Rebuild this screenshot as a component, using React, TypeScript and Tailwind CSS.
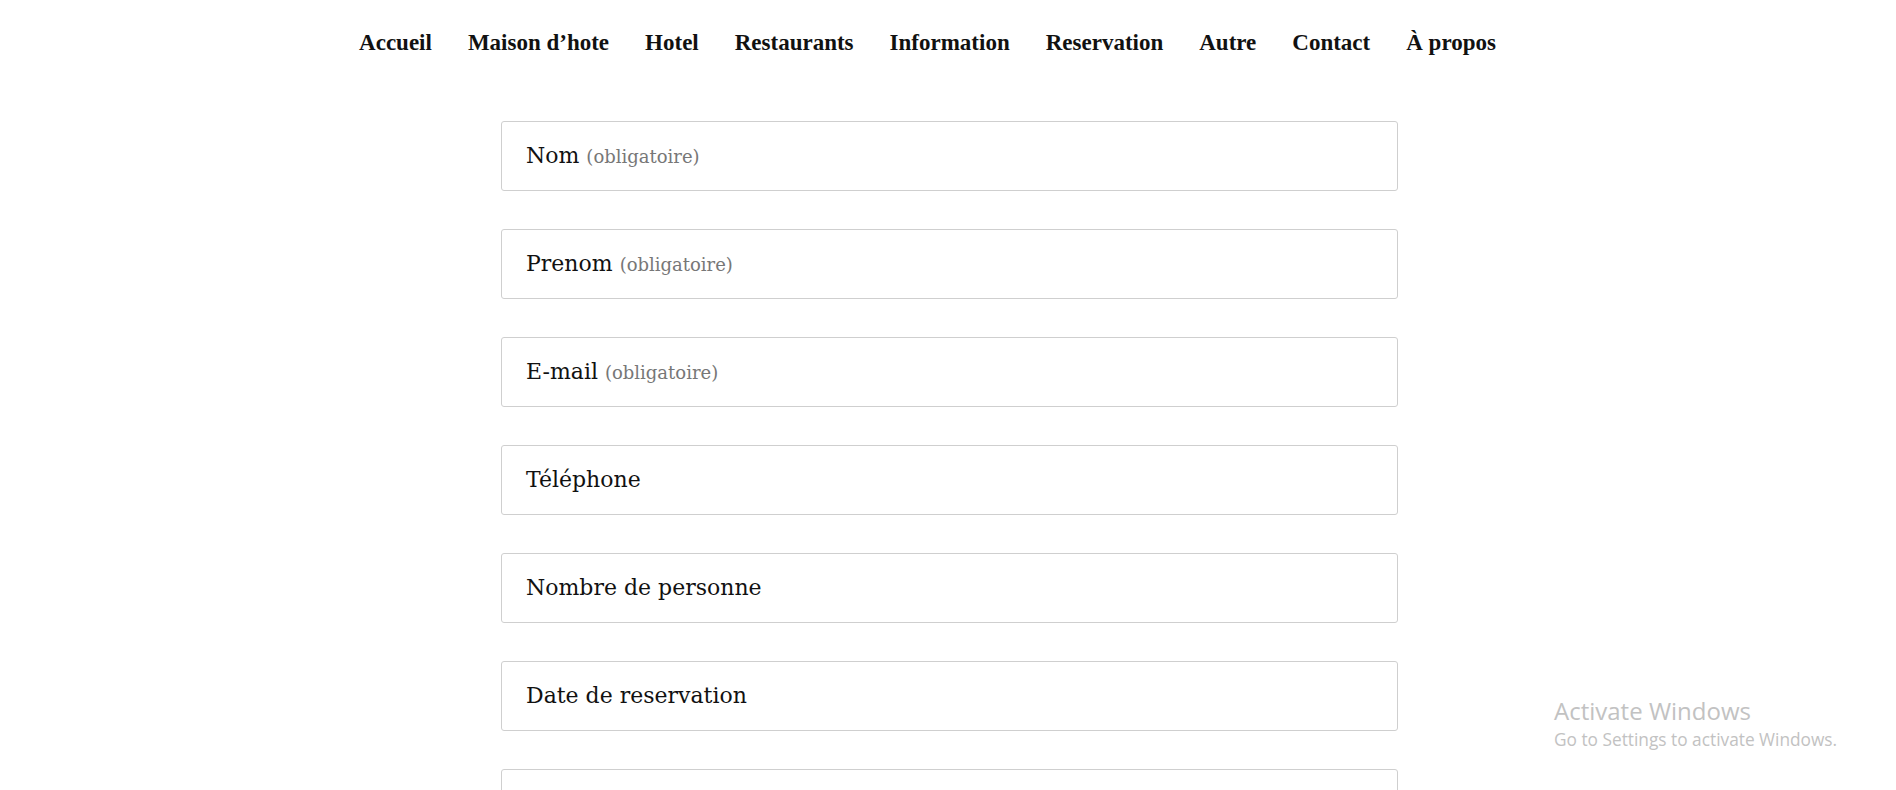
import React from "react";

const navItems = [
  "Accueil",
  "Maison d\u2019hote",
  "Hotel",
  "Restaurants",
  "Information",
  "Reservation",
  "Autre",
  "Contact",
  "\u00C0 propos",
];

const fields: { label: string; req?: boolean }[] = [
  { label: "Nom", req: true },
  { label: "Prenom", req: true },
  { label: "E-mail", req: true },
  { label: "Téléphone" },
  { label: "Nombre de personne" },
  { label: "Date de reservation" },
  { label: "Message" },
];

export default function App() {
  return (
    <div className="relative w-full h-[790px] overflow-hidden bg-white">
      <nav className="flex justify-center pr-[41px] pt-[31px]">
        <ul className="flex gap-[36px]">
          {navItems.map((n) => (
            <li
              key={n}
              className="text-[23px] leading-[23px] font-bold text-[#111]"
              style={{ fontFamily: '"Liberation Serif", "Times New Roman", serif' }}
            >
              {n}
            </li>
          ))}
        </ul>
      </nav>

      <form className="flex flex-col items-center gap-[38px] mt-[67px] pl-[3px]">
        {fields.map((f) => (
          <div
            key={f.label}
            className="w-[897px] h-[70px] shrink-0 border border-[#cfcfcf] rounded-[3px] flex items-center pl-[24px] pr-[25px] pb-[2px]"
            style={{ fontFamily: '"DejaVu Serif", Georgia, serif' }}
          >
            {f.label !== "Message" && (
              <span className="text-[22px] text-[#111]">
                {f.label}
                {f.req && (
                  <span className="text-[18px] text-[#777] ml-[7px]">(obligatoire)</span>
                )}
              </span>
            )}
          </div>
        ))}
      </form>

      <div
        className="absolute left-[1554px] top-[696px] text-[#c2c2c2] pointer-events-none"
        style={{ fontFamily: '"Open Sans", "Noto Sans", sans-serif' }}
      >
        <div className="text-[24px] leading-[30px] font-normal">Activate Windows</div>
        <div className="text-[17.3px] leading-[22px] mt-[3px]">Go to Settings to activate Windows.</div>
      </div>
    </div>
  );
}
